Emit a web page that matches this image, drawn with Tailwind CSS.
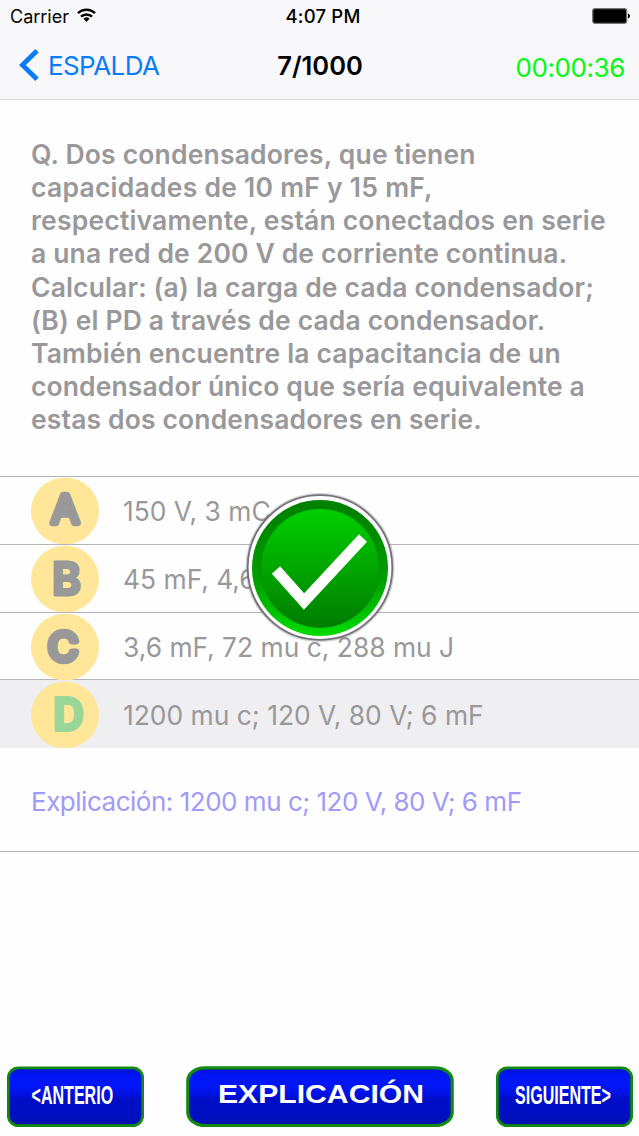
<!DOCTYPE html>
<html lang="es">
<head>
  <meta charset="UTF-8" />
  <meta name="viewport" content="width=device-width, initial-scale=1.0" />
  <title>7/1000</title>
  <script src="https://cdn.jsdelivr.net/npm/@tailwindcss/browser@4"></script>
</head>
<body class="bg-[#fefefe]">
  <div class="relative flex flex-col w-[639px] h-[1136px] overflow-hidden font-['Inter','Liberation_Sans',sans-serif]">
    <!-- Header -->
    <header class="h-[100px] shrink-0 bg-[#f8f7fa] border-b border-[#d6d5d9]">
      <div class="grid grid-cols-3 items-center h-8 pl-[10px] pr-[9px] text-[18px] text-black">
        <div class="flex items-center gap-2">
          <span>Carrier</span>
          <svg class="w-[19px] h-[15px] -mt-px" viewBox="0 0 19 15" fill="none" stroke="#000" stroke-width="2.5">
            <path d="M1 5.2a12 12 0 0 1 17 0" />
            <path d="M4 8.7a7.8 7.8 0 0 1 11 0" />
            <path d="M9.5 14l-3-3.2a4.3 4.3 0 0 1 6 0z" fill="#000" stroke="none" />
          </svg>
        </div>
        <span class="text-center text-[18.5px] font-medium whitespace-nowrap pl-[6px] pt-[2px] tracking-[0.2px]">4:07 PM</span>
        <svg class="justify-self-end w-[38px] h-4" viewBox="0 0 38 16">
          <rect x="0.7" y="0.7" width="34" height="14.6" rx="2.2" fill="#000" stroke="#777" stroke-width="1.2" />
          <path d="M36 5.5q2 .6 2 2.5t-2 2.5z" fill="#000" />
        </svg>
      </div>
      <div class="grid grid-cols-3 items-center h-[66px] pl-[19px] pr-[14px]">
        <div class="flex items-center gap-[9px] text-[#0a7cf8]">
          <svg class="w-5 h-8" viewBox="0 0 20 32" fill="none" stroke="currentColor" stroke-width="4.8">
            <path d="M18 1.7L3.4 16l14.6 14.3" />
          </svg>
          <span class="text-[26px] tracking-[-0.6px]">ESPALDA</span>
        </div>
        <span class="text-center text-[25.5px] font-semibold pt-[3px] -ml-1">7/1000</span>
        <span class="text-right text-[26px] text-[#00fa10] pt-1 whitespace-nowrap tracking-[-0.4px]">00:00:36</span>
      </div>
    </header>

    <!-- Question -->
    <section class="h-[376px] shrink-0 pt-[38px] pl-[31px] text-[26.5px] leading-[33.15px] font-semibold text-[#99989a] whitespace-nowrap tracking-[0.14px]">
      <p class="tracking-[0.18px]">Q. Dos condensadores, que tienen</p>
      <p class="tracking-[0.25px]">capacidades de 10 mF y 15 mF,</p>
      <p class="tracking-[0.18px]">respectivamente, están conectados en serie</p>
      <p>a una red de 200 V de corriente continua.</p>
      <p>Calcular: (a) la carga de cada condensador;</p>
      <p>(B) el PD a través de cada condensador.</p>
      <p>También encuentre la capacitancia de un</p>
      <p class="tracking-[0.1px]">condensador único que sería equivalente a</p>
      <p>estas dos condensadores en serie.</p>
    </section>

    <!-- Answers -->
    <ul class="shrink-0 text-[26.4px] text-[#99989a] whitespace-nowrap">
      <li class="flex items-center gap-6 h-[68px] pl-[31px] border-t border-[#b5b4b8]">
        <svg class="w-[68px] h-[67px] shrink-0" viewBox="0 0 68 67">
          <ellipse cx="34" cy="34" rx="34" ry="33.5" fill="#ffe699" />
          <text x="34" y="46" text-anchor="middle" font-size="38" font-weight="300" fill="#999" stroke="#999" stroke-width="6.6" stroke-linejoin="round" textLength="27" lengthAdjust="spacingAndGlyphs">A</text>
        </svg>
        <span class="pt-[2px]">150 V, 3 mC</span>
      </li>
      <li class="flex items-center gap-6 h-[68px] pl-[31px] border-t border-[#b5b4b8]">
        <svg class="w-[68px] h-[67px] shrink-0" viewBox="0 0 68 67">
          <ellipse cx="34" cy="34" rx="34" ry="33.5" fill="#ffe699" />
          <text x="35.5" y="50" text-anchor="middle" font-size="45" font-weight="700" fill="#999" stroke="#999" stroke-width="2.8" stroke-linejoin="round" textLength="29" lengthAdjust="spacingAndGlyphs">B</text>
        </svg>
        <span class="pt-[2px]">45 mF, 4,6 C</span>
      </li>
      <li class="flex items-center gap-6 h-[67px] pl-[31px] border-t border-[#b5b4b8]">
        <svg class="w-[68px] h-[67px] shrink-0" viewBox="0 0 68 67">
          <ellipse cx="34" cy="34" rx="34" ry="33.5" fill="#ffe699" />
          <text x="32" y="47.5" text-anchor="middle" font-size="39" font-weight="400" fill="#999" stroke="#999" stroke-width="6.5" stroke-linejoin="round" textLength="30" lengthAdjust="spacingAndGlyphs">C</text>
        </svg>
        <span class="pt-1">3,6 mF, 72 mu c, 288 mu J</span>
      </li>
      <li class="flex items-center gap-6 h-[69px] pl-[31px] border-t border-[#b5b4b8] bg-[#efeef0]">
        <svg class="w-[68px] h-[67px] shrink-0" viewBox="0 0 68 67">
          <ellipse cx="34" cy="34" rx="34" ry="33.5" fill="#ffe699" />
          <text x="37.5" y="50" text-anchor="middle" font-size="46" font-weight="800" fill="#99d799" stroke="#99d799" stroke-width="2" textLength="31" lengthAdjust="spacingAndGlyphs">D</text>
        </svg>
        <span class="pt-[3px]">1200 mu c; 120 V, 80 V; 6 mF</span>
      </li>
    </ul>

    <!-- Explanation -->
    <p class="h-[104px] shrink-0 pl-[31px] pt-[34px] leading-[40px] text-[26px] tracking-[-0.48px] text-[#a19af8] border-b border-[#b5b4b8] whitespace-nowrap">Explicación: 1200 mu c; 120 V, 80 V; 6 mF</p>

    <!-- Buttons -->
    <footer class="mt-auto flex justify-between pl-[7px] pr-[6px] pb-[9px]">
      <button class="w-[137px] h-[61px]">
        <svg class="w-full h-full" viewBox="0 0 137 61">
          <defs>
            <linearGradient id="gloss" x1="0" y1="0" x2="0" y2="1">
              <stop offset="0" stop-color="#0010d0" />
              <stop offset="0.12" stop-color="#0016f4" />
              <stop offset="0.3" stop-color="#0016f8" />
              <stop offset="0.49" stop-color="#0010dc" />
              <stop offset="0.52" stop-color="#000ec8" />
              <stop offset="0.9" stop-color="#0010bd" />
              <stop offset="1" stop-color="#0012a0" />
            </linearGradient>
          </defs>
          <rect x="1.3" y="1.8" width="134.4" height="57.8" rx="10" fill="url(#gloss)" stroke="#108a10" stroke-width="2.8" />
          <text transform="translate(24.5 38) scale(.643 1)" font-size="25" font-weight="700" font-family="Liberation Sans" fill="#fff">&lt;ANTERIO</text>
        </svg>
      </button>
      <button class="w-[268px] h-[61px]">
        <svg class="w-full h-full" viewBox="0 0 268 61">
          <rect x="1.8" y="1.8" width="264.4" height="57.8" rx="17" ry="13" fill="url(#gloss)" stroke="#108a10" stroke-width="3.2" />
          <text x="32" y="37" font-size="26" font-weight="700" font-family="Liberation Sans" fill="#fff" textLength="206" lengthAdjust="spacingAndGlyphs">EXPLICACIÓN</text>
        </svg>
      </button>
      <button class="w-[137px] h-[61px]">
        <svg class="w-full h-full" viewBox="0 0 137 61">
          <rect x="1.3" y="1.8" width="134.4" height="57.8" rx="10" fill="url(#gloss)" stroke="#108a10" stroke-width="2.8" />
          <text transform="translate(19 38) scale(.643 1)" font-size="25" font-weight="700" font-family="Liberation Sans" fill="#fff">SIGUIENTE&gt;</text>
        </svg>
      </button>
    </footer>

    <!-- Correct answer badge -->
    <svg class="absolute left-[245px] top-[492px] w-[150px] h-[150px]" viewBox="0 0 150 150">
      <defs>
        <linearGradient id="ring" x1="0" y1="0" x2="0" y2="1">
          <stop offset="0.1" stop-color="#008200" />
          <stop offset="0.6" stop-color="#00a000" />
          <stop offset="1" stop-color="#00dc00" />
        </linearGradient>
        <linearGradient id="disc" x1="0" y1="0" x2="0" y2="1">
          <stop offset="0" stop-color="#00d000" />
          <stop offset="1" stop-color="#007c00" />
        </linearGradient>
      </defs>
      <circle cx="75" cy="75.5" r="72.8" fill="none" stroke="#747077" stroke-opacity="0.3" stroke-width="3.4" />
      <circle cx="75" cy="75.5" r="72.3" fill="#fff" stroke="#747077" stroke-width="1.8" />
      <circle cx="75" cy="76" r="68" fill="url(#ring)" />
      <circle cx="75" cy="76" r="59.5" fill="url(#disc)" stroke="#007800" stroke-opacity="0.5" />
      <path d="M31 78L59 109.5L118 46" fill="none" stroke="#fff" stroke-width="11" />
    </svg>
  </div>
</body>
</html>
